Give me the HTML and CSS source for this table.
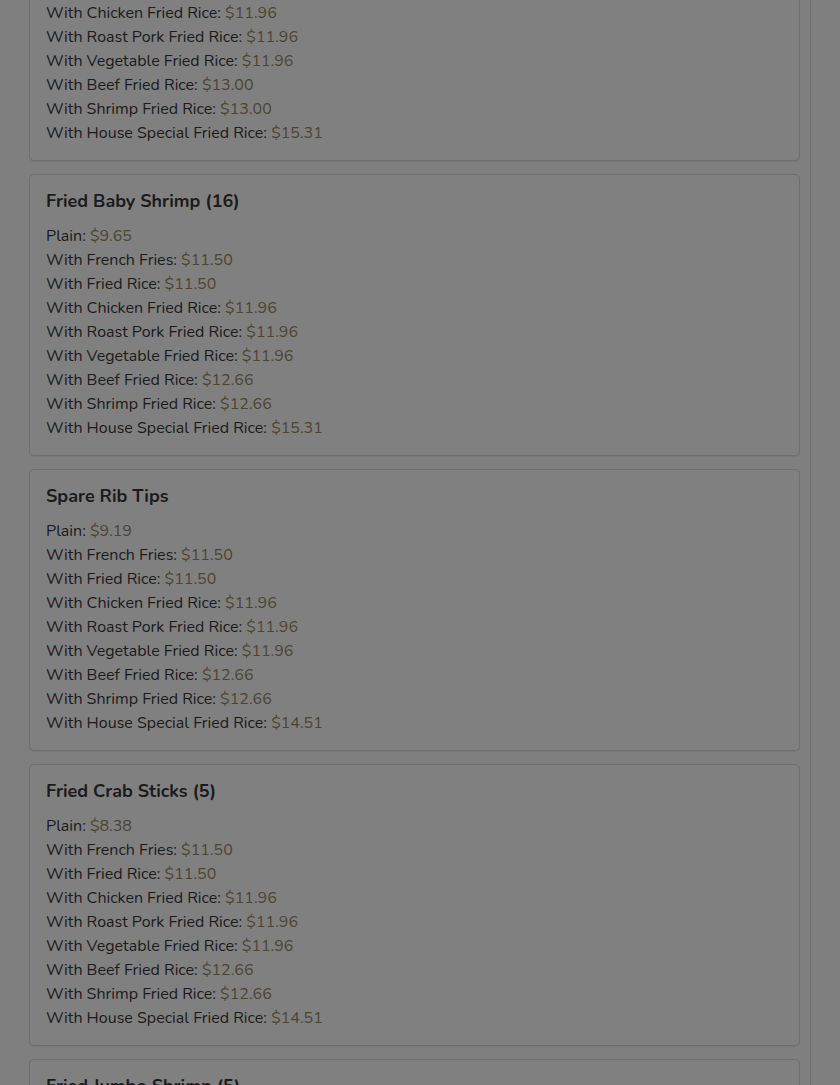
FILE: index.html
```html
<!DOCTYPE html>
<html>
<head>
<meta charset="utf-8">
<link rel="stylesheet" href="styles.css">
</head>
<body>
<div class="page">
  <div class="menu">
    <section class="card">
      <h3 class="title">Fried Chicken Wings (4)</h3>
      <div class="line">Plain: <span class="price">$9.65</span></div>
      <div class="line">With French Fries: <span class="price">$11.50</span></div>
      <div class="line">With Fried Rice: <span class="price">$11.50</span></div>
      <div class="line">With Chicken Fried Rice: <span class="price">$11.96</span></div>
      <div class="line">With Roast Pork Fried Rice: <span class="price">$11.96</span></div>
      <div class="line">With Vegetable Fried Rice: <span class="price">$11.96</span></div>
      <div class="line">With Beef Fried Rice: <span class="price">$13.00</span></div>
      <div class="line">With Shrimp Fried Rice: <span class="price">$13.00</span></div>
      <div class="line">With House Special Fried Rice: <span class="price">$15.31</span></div>
    </section>
    <section class="card">
      <h3 class="title">Fried Baby Shrimp (16)</h3>
      <div class="line">Plain: <span class="price">$9.65</span></div>
      <div class="line">With French Fries: <span class="price">$11.50</span></div>
      <div class="line">With Fried Rice: <span class="price">$11.50</span></div>
      <div class="line">With Chicken Fried Rice: <span class="price">$11.96</span></div>
      <div class="line">With Roast Pork Fried Rice: <span class="price">$11.96</span></div>
      <div class="line">With Vegetable Fried Rice: <span class="price">$11.96</span></div>
      <div class="line">With Beef Fried Rice: <span class="price">$12.66</span></div>
      <div class="line">With Shrimp Fried Rice: <span class="price">$12.66</span></div>
      <div class="line">With House Special Fried Rice: <span class="price">$15.31</span></div>
    </section>
    <section class="card">
      <h3 class="title">Spare Rib Tips</h3>
      <div class="line">Plain: <span class="price">$9.19</span></div>
      <div class="line">With French Fries: <span class="price">$11.50</span></div>
      <div class="line">With Fried Rice: <span class="price">$11.50</span></div>
      <div class="line">With Chicken Fried Rice: <span class="price">$11.96</span></div>
      <div class="line">With Roast Pork Fried Rice: <span class="price">$11.96</span></div>
      <div class="line">With Vegetable Fried Rice: <span class="price">$11.96</span></div>
      <div class="line">With Beef Fried Rice: <span class="price">$12.66</span></div>
      <div class="line">With Shrimp Fried Rice: <span class="price">$12.66</span></div>
      <div class="line">With House Special Fried Rice: <span class="price">$14.51</span></div>
    </section>
    <section class="card">
      <h3 class="title">Fried Crab Sticks (5)</h3>
      <div class="line">Plain: <span class="price">$8.38</span></div>
      <div class="line">With French Fries: <span class="price">$11.50</span></div>
      <div class="line">With Fried Rice: <span class="price">$11.50</span></div>
      <div class="line">With Chicken Fried Rice: <span class="price">$11.96</span></div>
      <div class="line">With Roast Pork Fried Rice: <span class="price">$11.96</span></div>
      <div class="line">With Vegetable Fried Rice: <span class="price">$11.96</span></div>
      <div class="line">With Beef Fried Rice: <span class="price">$12.66</span></div>
      <div class="line">With Shrimp Fried Rice: <span class="price">$12.66</span></div>
      <div class="line">With House Special Fried Rice: <span class="price">$14.51</span></div>
    </section>
    <section class="card">
      <h3 class="title">Fried Jumbo Shrimp (5)</h3>
      <div class="line">Plain: <span class="price">$9.65</span></div>
      <div class="line">With French Fries: <span class="price">$11.50</span></div>
    </section>
  </div>
</div>
</body>
</html>
```
FILE: styles.css
```css
html, body {
  margin: 0;
  padding: 0;
  height: 100%;
  overflow: hidden;
  background: #7f7f7f;
}
body {
  font-family: "Nunito", "Noto Sans", sans-serif;
  color: #1b1b1b;
}
.page {
  width: 811px;
  height: 1085px;
  overflow: hidden;
  border-right: 1px solid #6c6c6c;
  box-sizing: border-box;
}
.menu {
  margin-top: -121px;
  padding: 0 10px 0 29px;
  display: flex;
  flex-direction: column;
  gap: 13px;
}
.card {
  background: #808080;
  border: 1px solid #6e6e6e;
  border-radius: 5px;
  padding: 15px 16px 15px 16px;
  box-shadow: 0 1px 1px rgba(0,0,0,0.06);
}
.title {
  margin: 0 0 12px 0;
  font-size: 18px;
  line-height: 22px;
  font-weight: 700;
  color: #1b1b1b;
}
.line {
  font-size: 16px;
  line-height: 24px;
}
.price {
  color: #4d4530;
}
```
